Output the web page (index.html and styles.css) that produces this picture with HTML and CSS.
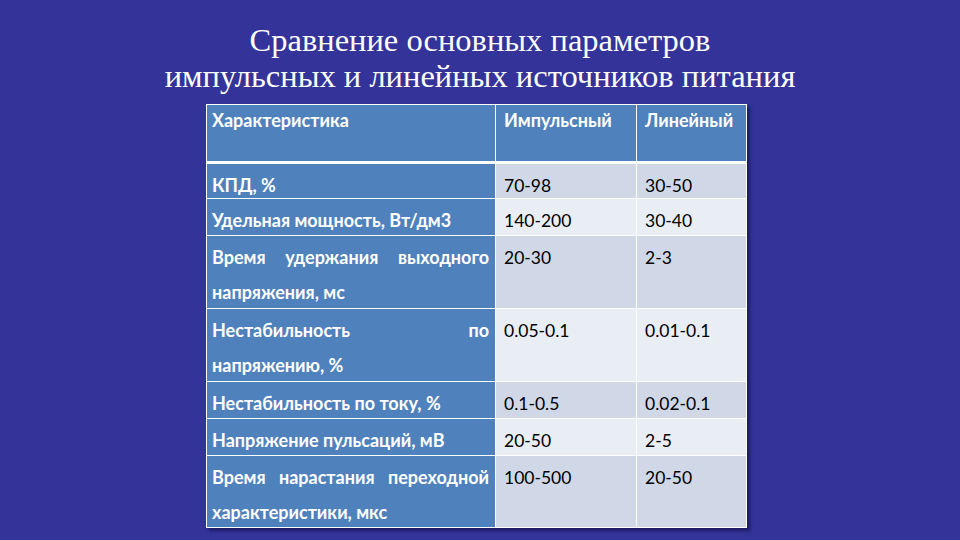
FILE: index.html
```html
<!DOCTYPE html>
<html lang="ru">
<head>
<meta charset="utf-8">
<link rel="stylesheet" href="styles.css">
</head>
<body>
<div class="slide">
  <h1 class="title">Сравнение основных параметров<br>импульсных и линейных источников питания</h1>
  <div class="table">
    <div class="cell head first">Характеристика</div>
    <div class="cell head">Импульсный</div>
    <div class="cell head">Линейный</div>

    <div class="cell first">КПД, %</div>
    <div class="cell dark">70-98</div>
    <div class="cell dark">30-50</div>

    <div class="cell first">Удельная мощность, Вт/дм3</div>
    <div class="cell light">140-200</div>
    <div class="cell light">30-40</div>

    <div class="cell first"><span class="jl">Время удержания выходного</span>напряжения, мс</div>
    <div class="cell dark">20-30</div>
    <div class="cell dark">2-3</div>

    <div class="cell first"><span class="jl">Нестабильность по</span>напряжению, %</div>
    <div class="cell light">0.05-0.1</div>
    <div class="cell light">0.01-0.1</div>

    <div class="cell first">Нестабильность по току, %</div>
    <div class="cell dark">0.1-0.5</div>
    <div class="cell dark">0.02-0.1</div>

    <div class="cell first">Напряжение пульсаций, мВ</div>
    <div class="cell light">20-50</div>
    <div class="cell light">2-5</div>

    <div class="cell first"><span class="jl">Время нарастания переходной</span>характеристики, мкс</div>
    <div class="cell dark">100-500</div>
    <div class="cell dark">20-50</div>
  </div>
</div>
</body>
</html>
```
FILE: styles.css
```css
html, body {
  margin: 0;
  padding: 0;
}
body {
  width: 960px;
  height: 540px;
  background: #333399;
  overflow: hidden;
}
.slide {
  padding-top: 22px;
}
.title {
  margin: 0;
  font-family: "Liberation Serif", "Times New Roman", serif;
  font-weight: normal;
  font-size: 32.5px;
  line-height: 36px;
  color: #ffffff;
  text-align: center;
}
.table {
  margin: 10px 0 0 206px;
  width: 541px;
  box-sizing: border-box;
  display: grid;
  grid-template-columns: 288px 140px 109px;
  grid-template-rows: 58px 34px 36px 72px 72px 36px 36px 71px;
  gap: 1px;
  padding: 1px;
  background: #ffffff;
  box-shadow: 3px 3px 3px rgba(0, 0, 40, 0.45);
  font-family: Lato, "Open Sans", sans-serif;
  font-size: 17.5px;
}
.cell {
  box-sizing: border-box;
  padding: 4px 7px 0 8px;
  line-height: 35px;
  color: #000000;
  overflow: visible;
  white-space: nowrap;
}
.cell.head {
  background: #4f81bd;
  color: #ffffff;
  font-weight: 700;
  font-size: 18px;
  padding-top: 0;
  line-height: 31px;
  border-bottom: 2px solid #ffffff;
}
.cell.first {
  background: #4f81bd;
  color: #ffffff;
  font-weight: 700;
  font-size: 18px;
  padding-left: 5px;
  padding-right: 6px;
}
.cell.dark {
  background: #d0d8e8;
}
.cell.light {
  background: #e9edf4;
}
.jl {
  display: block;
  text-align: justify;
  text-align-last: justify;
}
```
